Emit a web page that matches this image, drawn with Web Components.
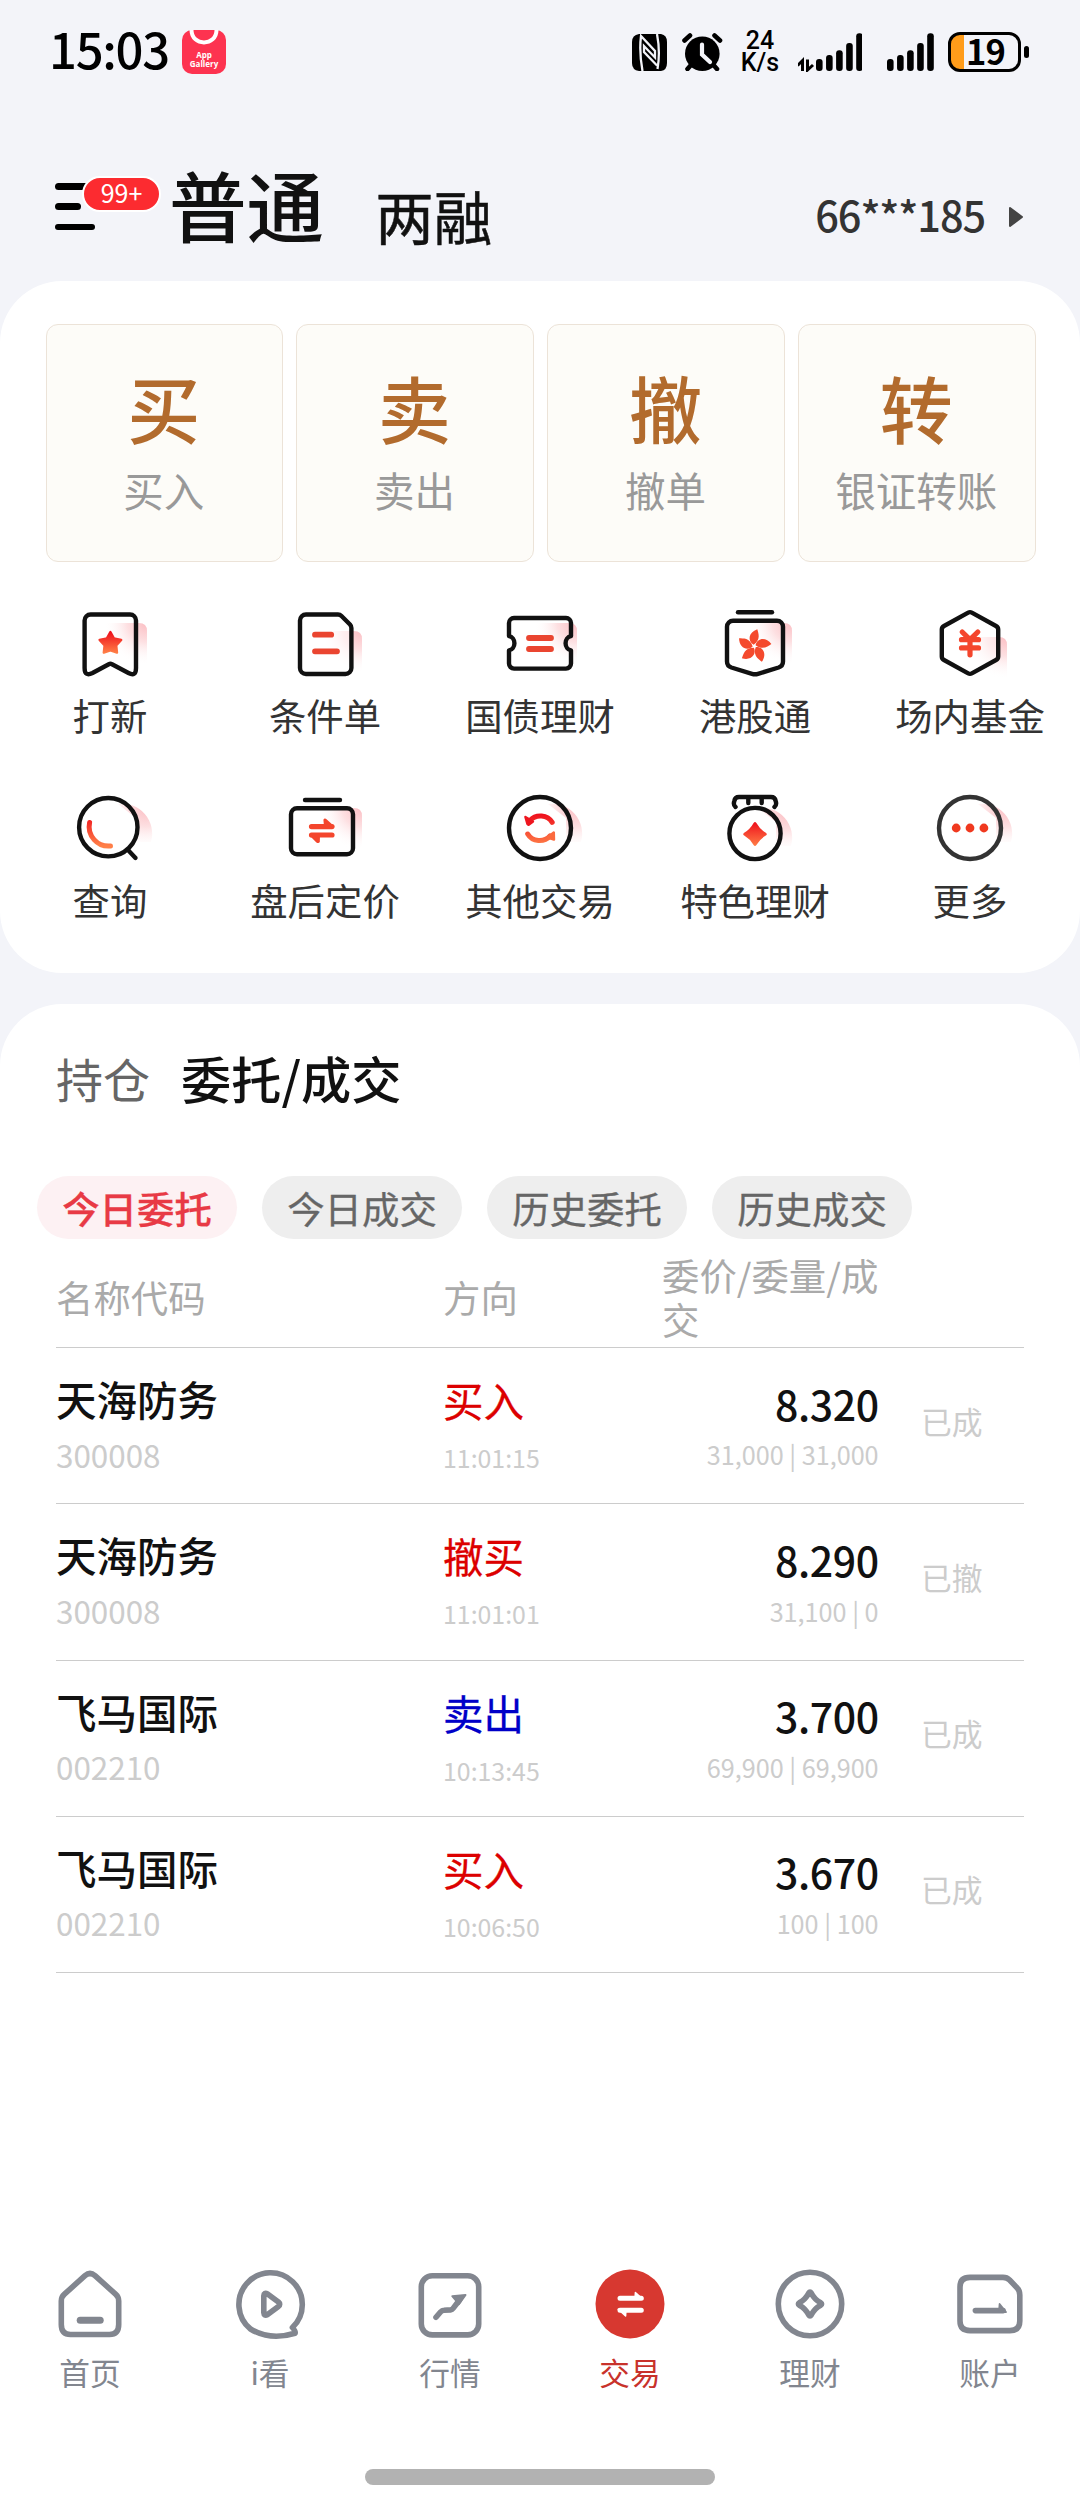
<!DOCTYPE html>
<html lang="zh-CN">
<head>
<meta charset="utf-8">
<title>交易</title>
<style>
    body {
        margin: 0;
        background: #f3f4f9;
        font-family: "Noto Sans CJK SC", "Noto Sans", sans-serif;
    }
</style>
</head>
<body>
<trade-app></trade-app>

<script>
const base = `* { box-sizing: border-box; } svg { display: block; flex: none; }`;

// Each drawing has its origin in the middle of the box
const pinkDefs = `
    <defs>
        <linearGradient id="hot" x1="0" y1="0" x2="0" y2="1">
            <stop offset="0" stop-color="#ee0f1c"/>
            <stop offset="1" stop-color="#ff7d46"/>
        </linearGradient>
        <linearGradient id="arc" gradientUnits="userSpaceOnUse" x1="0" y1="-14" x2="0" y2="18">
            <stop offset="0" stop-color="#ee0f1c"/>
            <stop offset="1" stop-color="#ff8048"/>
        </linearGradient>
        <radialGradient id="pink" gradientUnits="userSpaceOnUse" cx="36" cy="-20" r="42">
            <stop offset="0" stop-color="#fbbfc4"/>
            <stop offset=".45" stop-color="#fde0e2"/>
            <stop offset="1" stop-color="#fff" stop-opacity="0"/>
        </radialGradient>
    </defs>`;

const roundGlow = '<path d="M8 -24 A30 30 0 0 1 41 14 L26 14 V-10 Z" fill="url(#pink)"/>';
const squareGlow = '<path d="M-6 -20 H29 Q37 -20 37 -12 V20 H10 Z" fill="url(#pink)"/>';

const petals = [0, 72, 144, 216, 288].map(deg =>
    `<path transform="rotate(${deg})" d="M-.6 -1.5 C-7 -5 -6 -14 3 -17 C4 -13 7 -7 -.6 -1.5 Z"/>`).join('');

const featureIcons = {
    bookmark: `${squareGlow}
        <path class="ln" d="M-19 -28.5 H20 a6 6 0 0 1 6 6 V25 q0 9 -7.5 5 L2 21.2 q-1.6 -.8 -3.2 0 L-17.5 30 q-7.9 4 -7.9 -5 V-22.5 a6 6 0 0 1 6 -6 Z"/>
        <path d="M.4 -11 L3.9 -4.6 L11.2 -3.1 L6.2 2.4 L7 9.6 L.4 7.3 L-6.2 9.6 L-5.4 2.4 L-10.4 -3.1 L-3.1 -4.6 Z" fill="url(#hot)" stroke="url(#hot)" stroke-width="2.4" stroke-linejoin="round"/>`,
    sheet: `<g transform="translate(0 8)">${squareGlow}</g>
        <path class="ln" style="fill:#fff;fill-opacity:.5" d="M-19 -28.5 H13 q2 0 3.5 1.5 L25 -18.5 q1.4 1.5 1.4 3.5 V25 a6 6 0 0 1 -6 6 H-19 a6 6 0 0 1 -6 -6 V-22.5 a6 6 0 0 1 6 -6 Z"/>
        <path class="bar" d="M-10 -8.3 H6.2 M-10 8.3 H12"/>`,
    ticket: `${squareGlow}
        <path class="ln" d="M-26 -25 H26 a5 5 0 0 1 5 5 V-7 A6.5 7.3 0 0 0 31 7.4 V20.6 a5 5 0 0 1 -5 5 H-26 a5 5 0 0 1 -5 -5 V7.4 A6.5 7.3 0 0 0 -31 -7 V-20 a5 5 0 0 1 5 -5 Z"/>
        <path class="bar" d="M-11 -5 H11 M-11 6 H11"/>`,
    shield: `${squareGlow}
        <path class="ln" d="M-17 -30.7 H17"/>
        <path class="ln" d="M-22 -22.3 H22 a6 6 0 0 1 6 6 V18.5 q0 4.5 -4.4 6 L3 30.8 q-3 .9 -6 0 L-23.6 24.5 q-4.4 -1.5 -4.4 -6 V-16.3 a6 6 0 0 1 6 -6 Z"/>
        <g transform="translate(-.7 3.3)" fill="#f44a2d">${petals}</g>`,
    fund: `<g transform="translate(0 14)">${squareGlow}</g>
        <path class="ln" style="fill:#fff;fill-opacity:.4" d="M-1.8 -30.4 q1.8 -1 3.6 0 L26 -17 q2.2 1.2 2.2 3.6 V13.4 q0 2.4 -2.2 3.6 L1.8 30.4 q-1.8 1 -3.6 0 L-26 17 q-2.2 -1.2 -2.2 -3.6 V-13.4 q0 -2.4 2.2 -3.6 Z"/>
        <path d="M-7.8 -11 L0 -3.3 L7.8 -11 M0 -3.3 V11.8 M-8.5 -3.3 H8.5 M-8.5 4.9 H8.5" fill="none" stroke="#f4452c" stroke-width="5.2" stroke-linecap="round" stroke-linejoin="round"/>`,
    search: `${roundGlow}
        <circle class="ln" cx="-1.7" cy="-.8" r="29.2"/>
        <path class="ln" d="M18 22 L25.5 30"/>
        <path d="M-20.4 -5.5 A19.5 19.5 0 0 0 .5 18" fill="none" stroke="url(#arc)" stroke-width="5" stroke-linecap="round"/>`,
    fixed: `${squareGlow}
        <path class="ln" d="M-20 -28 H15"/>
        <rect class="ln" x="-34" y="-19.7" width="62" height="46" rx="6"/>
        <path d="M-13.5 -1.4 H7 M-13.5 7 H7" stroke="#f4452c" stroke-width="5.2" stroke-linecap="round"/>
        <path d="M-1.6 -8.3 Q-.4 -10.4 1.8 -8.6 L9.6 -1.5 H-1 Z M-5.2 14 Q-6.4 16 -8.6 14.4 L-16 7 H-5 Z" fill="#f4452c"/>`,
    swap: `${roundGlow}
        <circle class="ln" r="31"/>
        <path d="M-10 -7.5 A13.5 12.5 0 0 1 12.2 -5.6 M-12.3 6 A13.5 12.5 0 0 0 10 8" fill="none" stroke="url(#arc)" stroke-width="5" stroke-linecap="round"/>
        <path d="M-14.6 -11 L-7 -6.5 L-11 -3.4 Q-12 -3 -12.6 -4 Z" fill="#ee161f" stroke="#ee161f" stroke-width="2.4" stroke-linejoin="round"/>
        <path d="M13.8 4.4 L14 11.6 L7.5 9.5 Z" fill="#fb6a3e" stroke="#fb6a3e" stroke-width="2.4" stroke-linejoin="round"/>`,
    medal: `<g transform="translate(-5 4)">${roundGlow}</g>
        <circle class="ln" cy="5.5" r="25.6"/>
        <path class="ln" d="M-19.5 -21 Q-22 -23 -20.7 -27 Q-20 -31 -16 -31 H16 Q20 -31 20.7 -27 Q22 -23 19.5 -21 M-6.7 -31 V-25 M6.7 -31 V-25"/>
        <path d="M-1.4 -5 Q0 -7 1.4 -5 Q5 1.4 10.8 4.8 Q12.8 6.2 10.8 7.6 Q5 11 1.4 17 Q0 19 -1.4 17 Q-5 11 -10.8 7.6 Q-12.8 6.2 -10.8 4.8 Q-5 1.4 -1.4 -5 Z" fill="url(#hot)"/>`,
    more: `${roundGlow}
        <circle class="ln" r="31" style="stroke:#333"/>
        <g fill="#f0391f"><circle cx="-13.8" r="4.4"/><circle r="4.4"/><circle cx="13.9" r="4.4"/></g>`
};

const navIcons = {
    home: `<path d="M-5 -28.4 Q0 -32.6 5 -28.4 L25.8 -9.6 Q28.7 -7 28.7 -3 V20.5 Q28.7 30.5 19.5 30.5 H-19.5 Q-28.7 30.5 -28.7 20.5 V-3 Q-28.7 -7 -25.8 -9.6 Z"/>
        <path d="M-9.8 16.3 H10.2" stroke-width="7"/>`,
    watch: `<path d="M22.4 23.5 A31.7 31.7 0 1 0 -19.5 25 Q0 37 25 29.3 Q26 27.5 22.4 23.5 Z"/>
        <path d="M-6.2 -8 Q-6 -12 -2.4 -10 L8.4 -2 Q11 .2 8.4 2.4 L-2.4 10.5 Q-6 12.6 -6.2 8.6 Z"/>`,
    market: `<rect x="-28.7" y="-28.3" width="57.4" height="59.2" rx="11"/>
        <path d="M-14 13.3 L-9.5 8 Q-8 6.3 -6 6.3 L.5 5.9 Q2.2 5.7 3.3 4.2 L9.5 -4"/>
        <path d="M2.2 -7.8 L15.6 -9 L9 .2 Z" fill="currentColor" stroke-width="1.8"/>`,
    trade: `<circle r="34.5" fill="#d73830" stroke="none"/>
        <g stroke="#fff" fill="#fff"><path d="M-10 -5.7 H11.3 M-10 6.2 H11.3" stroke-width="5"/>
        <path d="M5.4 -11.5 L12.6 -5 H5 Z M-4.4 12 L-11.8 5.2 H-4 Z" stroke-width="1.5"/></g>`,
    wealth: `<circle r="31.7"/>
        <path d="M-1.2 -11 Q0 -13 1.2 -11 Q4.5 -4.5 10.7 -1.2 Q12.5 0 10.7 1.2 Q4.5 4.5 1.2 11 Q0 13 -1.2 11 Q-4.5 4.5 -10.7 1.2 Q-12.5 0 -10.7 -1.2 Q-4.5 -4.5 -1.2 -11 Z"/>`,
    account: `<path d="M-20 -26.6 H13 Q17 -26.6 19.6 -24 L27.2 -16 Q29.8 -13.4 29.8 -9 V17 Q29.8 26.6 20 26.6 H-20 Q-30 26.6 -30 17 V-17 Q-30 -26.6 -20 -26.6 Z"/>
        <path d="M-14.6 6.6 H13"/>
        <path d="M9.6 0 L16 8 H9 Z" fill="currentColor" stroke-width="1.8"/>`
};

class StatusBar extends HTMLElement {
    constructor() {
        super();
        const shadow = this.attachShadow({ mode: 'open' });
        const tops = [59, 55, 50.3, 43, 33.3];
        const bars = tops.map((top, i) =>
            `<rect x="${i * 10.05}" y="${top - 32}" width="6.6" height="${71 - top}" rx="3"/>`).join('');

        shadow.innerHTML = `
            <style>
                ${base}
                :host { display: flex; align-items: center; height: 104px; padding: 0 51px 0 49px; color: #000; }
                .clock { font-size: 49px; line-height: 90px; font-weight: 500; letter-spacing: -1.3px; width: 133px; margin-top: -8px; }
                .store { display: flex; flex-direction: column; align-items: center; width: 44px; height: 44px; border-radius: 10px;
                    background: #fd3350; color: #fff; font: bold 8px/9.3px "Open Sans", sans-serif; }
                .store svg { margin-bottom: 2.6px; }
                .speed { display: flex; flex-direction: column; align-items: center; width: 44px; font: 500 25px/22px Roboto, sans-serif; }
                .space { flex: 1; }
                .battery { display: flex; align-items: center; justify-content: center; width: 73px; height: 40px; border: 3px solid #000;
                    border-radius: 12px; background: linear-gradient(90deg, #ff9c1a 13.5px, #0000 13.5px); font-size: 34.5px; font-weight: 700; line-height: 34px; padding: 0 0 4px 2px; letter-spacing: -.8px; }
                .cap { width: 5px; height: 12px; border-radius: 3px; background: #000; margin-left: 3px; }
            </style>
            <span class="clock">15:03</span>
            <span class="store">
                <svg width="44" height="17" viewBox="0 0 44 17"><path d="M9.5 0 C9.5 16.5 34.5 16.5 34.5 0" fill="none" stroke="#fff" stroke-width="4"/></svg>
                <span>App</span><span>Gallery</span>
            </span>
            <span class="space"></span>
            <svg width="36" height="37" viewBox="0 0 36 37">
                <path d="M7 0 H29 Q35 1 35 8 V29 Q35 36 29 37 H7 Q0 36 0 29 V8 Q0 1 7 0 Z"/>
                <path d="M10.5 37 Q7 18 9 2 L23 17 V23.5 L12 12 V18 L25 31.5 M25 0 Q28.5 18 25.5 35" fill="none" stroke="#f3f4f9" stroke-width="2.3"/>
            </svg>
            <svg width="41" height="38" viewBox="0 0 41 38" style="margin-left:14px">
                <circle cx="20.3" cy="20.7" r="17.3"/>
                <path d="M2.5 7.5 L8 2.5 M38 7.5 L32.5 2.5 M9 32 L5.5 36 M31.5 32 L35 36" fill="none" stroke="#000" stroke-width="4.6" stroke-linecap="round"/>
                <path d="M20 11.5 V21.5 L28 29" fill="none" stroke="#f3f4f9" stroke-width="4.2" stroke-linecap="round"/>
            </svg>
            <span class="speed" style="margin-left:15px"><span>24</span><span>K/s</span></span>
            <svg width="64" height="40" viewBox="-18 0 64 40" style="margin-left:16px">
                ${bars}
                <path d="M-18.5 33.5 L-13.5 28.5 V39 M-3 33 L-8.5 38 V27.5" fill="none" stroke="#000" stroke-width="3"/>
            </svg>
            <svg width="47" height="40" viewBox="0 0 47 40" style="margin-left:25px">${bars}</svg>
            <span class="battery" style="margin-left:14px">19</span><span class="cap"></span>`;
    }
}
customElements.define('status-bar', StatusBar);

class AccountHeader extends HTMLElement {
    constructor() {
        super();
        const shadow = this.attachShadow({ mode: 'open' });
        shadow.innerHTML = `
            <style>
                ${base}
                :host { display: flex; align-items: flex-start; height: 177px; padding: 0 56px 0 55px; color: #111; line-height: 1; }
                .menu { position: relative; width: 114px; padding-top: 79px; }
                .menu i { display: block; width: 40px; height: 6.6px; border-radius: 4px; background: #000; margin-bottom: 13.8px; }
                .menu i:nth-child(2) { width: 26px; }
                .badge { position: absolute; left: 27px; top: 72px; width: 79px; height: 36px; border: 2px solid #fff; border-radius: 18px;
                    background: #fc2b30; color: #fff; font-size: 25px; line-height: 28px; text-align: center; }
                .main { font-size: 77.6px; font-weight: 500; margin-top: 60.6px; }
                .other { font-size: 58.5px; margin: 81.5px 0 0 51px; -webkit-text-stroke: .5px #111; }
                .account { font-size: 41.5px; font-weight: 500; letter-spacing: -1.1px; color: #333; margin: 89.5px 0 0 auto; }
                .arrow { margin: 102px 0 0 23px; }
            </style>
            <div class="menu"><i></i><i></i><i></i><span class="badge">99+</span></div>
            <span class="main">普通</span>
            <span class="other">两融</span>
            <span class="account">66***185</span>
            <svg class="arrow" width="16" height="22" viewBox="0 0 16 22"><path d="M2 2 L14 11 L2 20 Z" fill="#444" stroke="#444" stroke-width="2" stroke-linejoin="round"/></svg>`;
    }
}
customElements.define('account-header', AccountHeader);

class QuickButton extends HTMLElement {
    constructor() {
        super();
        const shadow = this.attachShadow({ mode: 'open' });
        shadow.innerHTML = `
            <style>
                ${base}
                :host { box-sizing: border-box; flex: 1; display: flex; flex-direction: column; align-items: center; height: 238px; padding: 45px 1px 0 0;
                    border: 1px solid #ece3d8; border-radius: 12px; background: #fdfcf8; line-height: 1; }
                b { font-size: 73px; font-weight: 500; color: #b26b2d; }
                span { font-size: 40.5px; color: #999; margin-top: 27px; }
            </style>
            <b>${this.getAttribute('mark')}</b>
            <span><slot></slot></span>`;
    }
}
customElements.define('quick-button', QuickButton);

class FeatureItem extends HTMLElement {
    constructor() {
        super();
        const shadow = this.attachShadow({ mode: 'open' });
        shadow.innerHTML = `
            <style>
                ${base}
                :host { display: flex; flex-direction: column; align-items: center; gap: 14px; font-size: 37.4px; line-height: 37.5px; color: #333; white-space: nowrap; }
                .ln { fill: none; stroke: #111; stroke-width: 4.4; stroke-linecap: round; stroke-linejoin: round; }
                .bar { fill: none; stroke: #ea4530; stroke-width: 5.8; stroke-linecap: round; }
            </style>
            <svg width="96" height="80" viewBox="-48 -40 96 80">${pinkDefs}${featureIcons[this.getAttribute('icon')]}</svg>
            <span><slot></slot></span>`;
    }
}
customElements.define('feature-item', FeatureItem);

class FilterChip extends HTMLElement {
    constructor() {
        super();
        const shadow = this.attachShadow({ mode: 'open' });
        shadow.innerHTML = `
            <style>
                :host { width: 200px; height: 63px; border-radius: 32px; background: #eee; color: #666; font-size: 37.4px; line-height: 64px; text-align: center; -webkit-text-stroke: .3px; }
                :host([active]) { background: #fdf1f3; color: #e83a45; font-weight: 500; }
            </style>
            <slot></slot>`;
    }
}
customElements.define('filter-chip', FilterChip);

class OrderRow extends HTMLElement {
    constructor() {
        super();
        const shadow = this.attachShadow({ mode: 'open' });
        const get = name => this.getAttribute(name);
        shadow.innerHTML = `
            <style>
                ${base}
                :host { box-sizing: border-box; display: grid; grid-template-columns: 387px 219px 218px 1fr; height: 156.3px;
                    border-bottom: 1px solid #ccc; line-height: 1; color: #ccc; }
                div { display: flex; flex-direction: column; white-space: nowrap; }
                .stock { padding-top: 31px; gap: 19px; font-size: 31.4px; }
                .stock b { font-size: 40.5px; font-weight: 500; color: #111; }
                .side { padding-top: 32px; gap: 24.5px; font-size: 24.9px; }
                .side b { font-size: 40.5px; font-weight: 400; -webkit-text-stroke: .3px; color: ${get('side') === 'sell' ? '#0000c8' : '#dc0000'}; }
                .deal { padding: 34.6px 1.4px 0 0; gap: 18.7px; align-items: flex-end; font-size: 25.2px; }
                .deal b { font-size: 41px; font-weight: 500; color: #111; letter-spacing: -.4px; }
                .state { padding: 57.6px 0 0 41px; font-size: 30.8px; }
            </style>
            <div class="stock"><b>${get('name')}</b><span>${get('code')}</span></div>
            <div class="side"><b>${get('action')}</b><span>${get('time')}</span></div>
            <div class="deal"><b>${get('price')}</b><span>${get('volume')}</span></div>
            <div class="state"><slot></slot></div>`;
    }
}
customElements.define('order-row', OrderRow);

class OrdersPanel extends HTMLElement {
    constructor() {
        super();
        const shadow = this.attachShadow({ mode: 'open' });
        shadow.innerHTML = `
            <style>
                ${base}
                :host { display: block; flex: 1; background: #fff; border-radius: 62px 62px 0 0; margin-top: 31px; }
                .tabs { display: flex; align-items: flex-start; height: 172px; padding: 47px 56px 0; line-height: 1; font-size: 47px; color: #666; }
                .tabs span { margin-top: 3px; }
                .tabs b { font-size: 50.2px; font-weight: 500; color: #111; margin: .6px 0 0 31px; }
                .chips { display: flex; gap: 25px; padding-left: 37px; }
                .table { padding: 0 56px; }
                .head { display: grid; grid-template-columns: 387px 219px 218px 1fr; align-items: center; height: 109px; padding-top: 7px;
                    border-bottom: 1px solid #ccc; font-size: 37.4px; line-height: 44px; color: #aaa; }
            </style>
            <div class="tabs"><span>持仓</span><b>委托/成交</b></div>
            <div class="chips">
                <filter-chip active>今日委托</filter-chip>
                <filter-chip>今日成交</filter-chip>
                <filter-chip>历史委托</filter-chip>
                <filter-chip>历史成交</filter-chip>
            </div>
            <div class="table">
                <div class="head"><span>名称代码</span><span>方向</span><span>委价/委量/成交</span></div>
                <slot></slot>
            </div>`;
    }
}
customElements.define('orders-panel', OrdersPanel);

class NavItem extends HTMLElement {
    constructor() {
        super();
        const shadow = this.attachShadow({ mode: 'open' });
        shadow.innerHTML = `
            <style>
                ${base}
                :host { flex: 1; display: flex; flex-direction: column; align-items: center; gap: 13px; color: #82868f; font-size: 30.7px; line-height: 1; }
                :host([active]) { color: #c8322b; }
                svg { fill: none; stroke: currentColor; stroke-width: 5.6; stroke-linecap: round; stroke-linejoin: round; }
            </style>
            <svg width="80" height="80" viewBox="-40 -40 80 80">${navIcons[this.getAttribute('icon')]}</svg>
            <span><slot></slot></span>`;
    }
}
customElements.define('nav-item', NavItem);

class TradeApp extends HTMLElement {
    constructor() {
        super();
        const shadow = this.attachShadow({ mode: 'open' });
        shadow.innerHTML = `
            <style>
                ${base}
                :host { display: flex; flex-direction: column; width: 1080px; height: 2504px; overflow: hidden; }
                .card { height: 692px; padding-top: 43px; background: #fff; border-radius: 62px; }
                .quick { display: flex; gap: 13.3px; padding: 0 44.5px 0 45.5px; }
                .features { display: grid; grid-template-columns: repeat(5, 215px); justify-content: center; row-gap: 53.8px; margin-top: 40.7px; }
                nav { display: flex; height: 205px; background: #fff; }
                footer { display: flex; justify-content: center; height: 35px; background: #fff; }
                footer i { width: 350px; height: 16px; border-radius: 8px; background: #b2b2b2; }
            </style>
            <status-bar></status-bar>
            <account-header></account-header>
            <section class="card">
                <div class="quick">
                    <quick-button mark="买">买入</quick-button>
                    <quick-button mark="卖">卖出</quick-button>
                    <quick-button mark="撤">撤单</quick-button>
                    <quick-button mark="转">银证转账</quick-button>
                </div>
                <div class="features">
                    <feature-item icon="bookmark">打新</feature-item>
                    <feature-item icon="sheet">条件单</feature-item>
                    <feature-item icon="ticket">国债理财</feature-item>
                    <feature-item icon="shield">港股通</feature-item>
                    <feature-item icon="fund">场内基金</feature-item>
                    <feature-item icon="search">查询</feature-item>
                    <feature-item icon="fixed">盘后定价</feature-item>
                    <feature-item icon="swap">其他交易</feature-item>
                    <feature-item icon="medal">特色理财</feature-item>
                    <feature-item icon="more">更多</feature-item>
                </div>
            </section>
            <orders-panel>
                <order-row name="天海防务" code="300008" side="buy" action="买入" time="11:01:15" price="8.320" volume="31,000 | 31,000">已成</order-row>
                <order-row name="天海防务" code="300008" side="buy" action="撤买" time="11:01:01" price="8.290" volume="31,100 | 0">已撤</order-row>
                <order-row name="飞马国际" code="002210" side="sell" action="卖出" time="10:13:45" price="3.700" volume="69,900 | 69,900">已成</order-row>
                <order-row name="飞马国际" code="002210" side="buy" action="买入" time="10:06:50" price="3.670" volume="100 | 100">已成</order-row>
            </orders-panel>
            <nav>
                <nav-item icon="home">首页</nav-item>
                <nav-item icon="watch">i看</nav-item>
                <nav-item icon="market">行情</nav-item>
                <nav-item icon="trade" active>交易</nav-item>
                <nav-item icon="wealth">理财</nav-item>
                <nav-item icon="account">账户</nav-item>
            </nav>
            <footer><i></i></footer>`;
    }
}
customElements.define('trade-app', TradeApp);
</script>
</body>
</html>
